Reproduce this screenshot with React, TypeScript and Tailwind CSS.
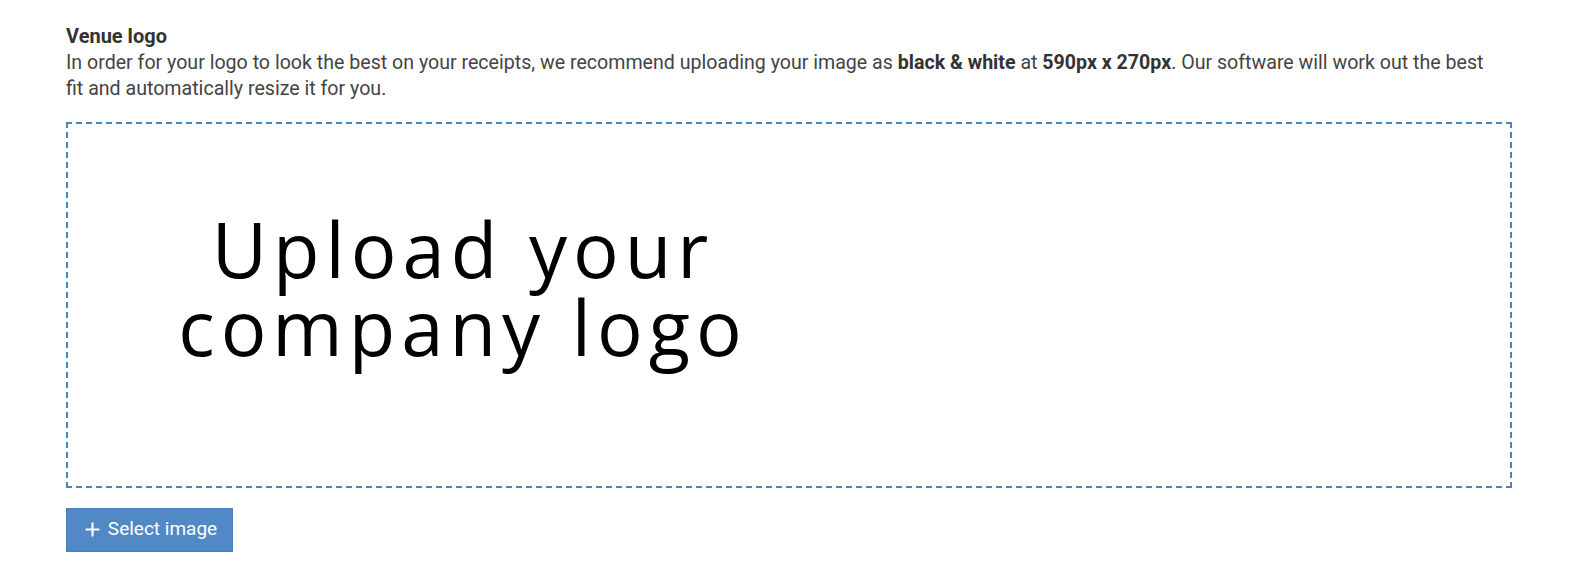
import { Plus } from "lucide-react";

const App = () => {
    return (
        <div className="w-[1588px] h-[568px] bg-white pl-[66px] pt-[23px]" style={{ fontFamily: "Roboto, 'Liberation Sans', sans-serif" }}>
            <div className="w-[1446px]">
                <p className="font-bold text-[20px] leading-[26.5px] text-[#333333]">Venue logo</p>
                <p className="text-[19.6px] leading-[26.5px] text-[#444444] pr-[16px]">
                    In order for your logo to look the best on your receipts, we recommend uploading your image as{" "}
                    <span className="font-bold text-[#333333]">black &amp; white</span> at{" "}
                    <span className="font-bold text-[#333333]">590px x 270px</span>. Our software will work out the best fit and automatically resize it for you.
                </p>
                <div className="mt-[19px] h-[366px] border-2 border-dashed border-[#4a86b8] flex">
                    <div className="w-[790px] h-full flex flex-col items-center justify-center pb-[34px]">
                        <p
                            className="text-black text-[76px] leading-[78px] text-center tracking-[6px]"
                            style={{ fontFamily: "'Open Sans', sans-serif" }}
                        >
                            Upload your
                            <br />
                            company logo
                        </p>
                    </div>
                </div>
                <button className="mt-[20px] h-[44px] w-[167px] flex items-center justify-center gap-[5px] bg-[#5089c6] border border-[#4a7fb8] text-white text-[19px]">
                    <Plus className="w-[21px] h-[21px]" strokeWidth={2.4} />
                    Select image
                </button>
            </div>
        </div>
    );
};

export default App;
